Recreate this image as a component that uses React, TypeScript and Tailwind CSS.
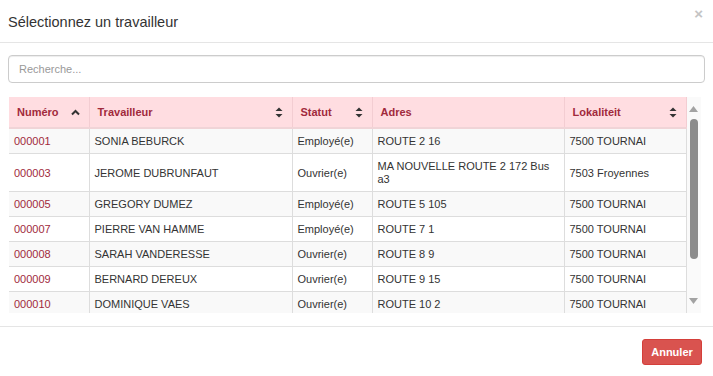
import React from 'react';

interface Worker {
  num: string;
  name: string;
  statut: string;
  adres: string;
  lok: string;
}

const workers: Worker[] = [
  { num: '000001', name: 'SONIA BEBURCK', statut: 'Employé(e)', adres: 'ROUTE 2 16', lok: '7500 TOURNAI' },
  { num: '000003', name: 'JEROME DUBRUNFAUT', statut: 'Ouvrier(e)', adres: 'MA NOUVELLE ROUTE 2 172 Bus a3', lok: '7503 Froyennes' },
  { num: '000005', name: 'GREGORY DUMEZ', statut: 'Employé(e)', adres: 'ROUTE 5 105', lok: '7500 TOURNAI' },
  { num: '000007', name: 'PIERRE VAN HAMME', statut: 'Employé(e)', adres: 'ROUTE 7 1', lok: '7500 TOURNAI' },
  { num: '000008', name: 'SARAH VANDERESSE', statut: 'Ouvrier(e)', adres: 'ROUTE 8 9', lok: '7500 TOURNAI' },
  { num: '000009', name: 'BERNARD DEREUX', statut: 'Ouvrier(e)', adres: 'ROUTE 9 15', lok: '7500 TOURNAI' },
  { num: '000010', name: 'DOMINIQUE VAES', statut: 'Ouvrier(e)', adres: 'ROUTE 10 2', lok: '7500 TOURNAI' },
];

// double caret (sortable)
const SortIcon = () => (
  <svg width="8" height="11" viewBox="0 0 8 11" className="shrink-0">
    <path d="M4 0.5 L7.5 4 L0.5 4 Z" fill="#333" />
    <path d="M4 10.5 L7.5 7 L0.5 7 Z" fill="#333" />
  </svg>
);

// sorted ascending
const SortUp = () => (
  <svg width="9" height="7" viewBox="0 0 9 7" className="shrink-0">
    <path d="M1 5.5 L4.5 2 L8 5.5" fill="none" stroke="#333" strokeWidth="2" />
  </svg>
);

const cols = [
  { label: 'Numéro', w: 'w-[80px]', icon: 'up' },
  { label: 'Travailleur', w: 'w-[203px]', icon: 'sort' },
  { label: 'Statut', w: 'w-[80px]', icon: 'sort' },
  { label: 'Adres', w: 'w-[192px]', icon: '' },
  { label: 'Lokaliteit', w: 'w-[122px]', icon: 'sort' },
];

const td = 'border border-[#ddd] px-[5px] pt-[6px] pb-[5px] leading-[13px]';

export default function App() {
  return (
    <div className="w-[713px] h-[376px] bg-white text-[#333] font-['Liberation_Sans',Arial,sans-serif] overflow-hidden">
      {/* Header */}
      <div className="h-[43px] flex items-center justify-between pl-2 pr-[10px] border-b border-[#e5e5e5]">
        <h4 className="text-[14.5px] text-[#333] pt-[3px]">Sélectionnez un travailleur</h4>
        <span className="text-[15px] font-bold text-[#c4c4c4] leading-none -mt-[15px]">×</span>
      </div>

      {/* Body */}
      <div className="px-2 pt-3 pb-[13px] border-b border-[#e5e5e5]">
        <input
          placeholder="Recherche..."
          className="w-full h-[28px] border border-[#ccc] rounded-[4px] px-[10px] text-[11px] text-[#555] placeholder:text-[#999] outline-none shadow-[inset_0_1px_1px_rgba(0,0,0,0.075)]"
        />

        <div className="mt-[14px] ml-px mr-[2px] h-[216px] flex overflow-hidden">
          <table className="w-[677px] border-collapse text-[11px] table-fixed self-start">
            <thead>
              <tr className="bg-[#ffdde1] h-[31px]">
                {cols.map((c) => (
                  <th
                    key={c.label}
                    className={`${c.w} border-x border-[#f3cdd2] border-b-2 border-b-[#f0d4d7] text-left font-bold text-[#a12a3c] pl-[8px] pr-[9px] first:border-l-0`}
                  >
                    <div className="flex items-center justify-between">
                      <span>{c.label}</span>
                      {c.icon === 'up' && <SortUp />}
                      {c.icon === 'sort' && <SortIcon />}
                    </div>
                  </th>
                ))}
              </tr>
            </thead>
            <tbody>
              {workers.map((w, i) => (
                <tr key={w.num} className={i % 2 === 0 ? 'bg-[#f9f9f9]' : 'bg-white'}>
                  <td className={`${td} border-l-0 text-[#a12a3c]`}>{w.num}</td>
                  <td className={td}>{w.name}</td>
                  <td className={td}>{w.statut}</td>
                  <td className={td}>{w.adres}</td>
                  <td className={td}>{w.lok}</td>
                </tr>
              ))}
            </tbody>
          </table>

          {/* Scrollbar */}
          <div className="w-[14px] h-full bg-[#fafafa] flex flex-col items-center">
            <svg width="9" height="6" viewBox="0 0 9 6" className="mt-[9px]">
              <path d="M4.5 0 L9 6 L0 6 Z" fill="#a3a3a3" />
            </svg>
            <div className="w-[8px] h-[140px] mt-[7px] rounded-full bg-[#8c8c8c]" />
            <div className="flex-1" />
            <svg width="9" height="6" viewBox="0 0 9 6" className="mb-[9px]">
              <path d="M4.5 6 L9 0 L0 0 Z" fill="#a3a3a3" />
            </svg>
          </div>
        </div>
      </div>

      {/* Footer */}
      <div className="flex justify-end pt-[12px] pr-[11px]">
        <button className="h-[26px] w-[60px] rounded-[3px] bg-[#d9534f] border border-[#d43f3a] text-white text-[11px] font-bold">
          Annuler
        </button>
      </div>
    </div>
  );
}
